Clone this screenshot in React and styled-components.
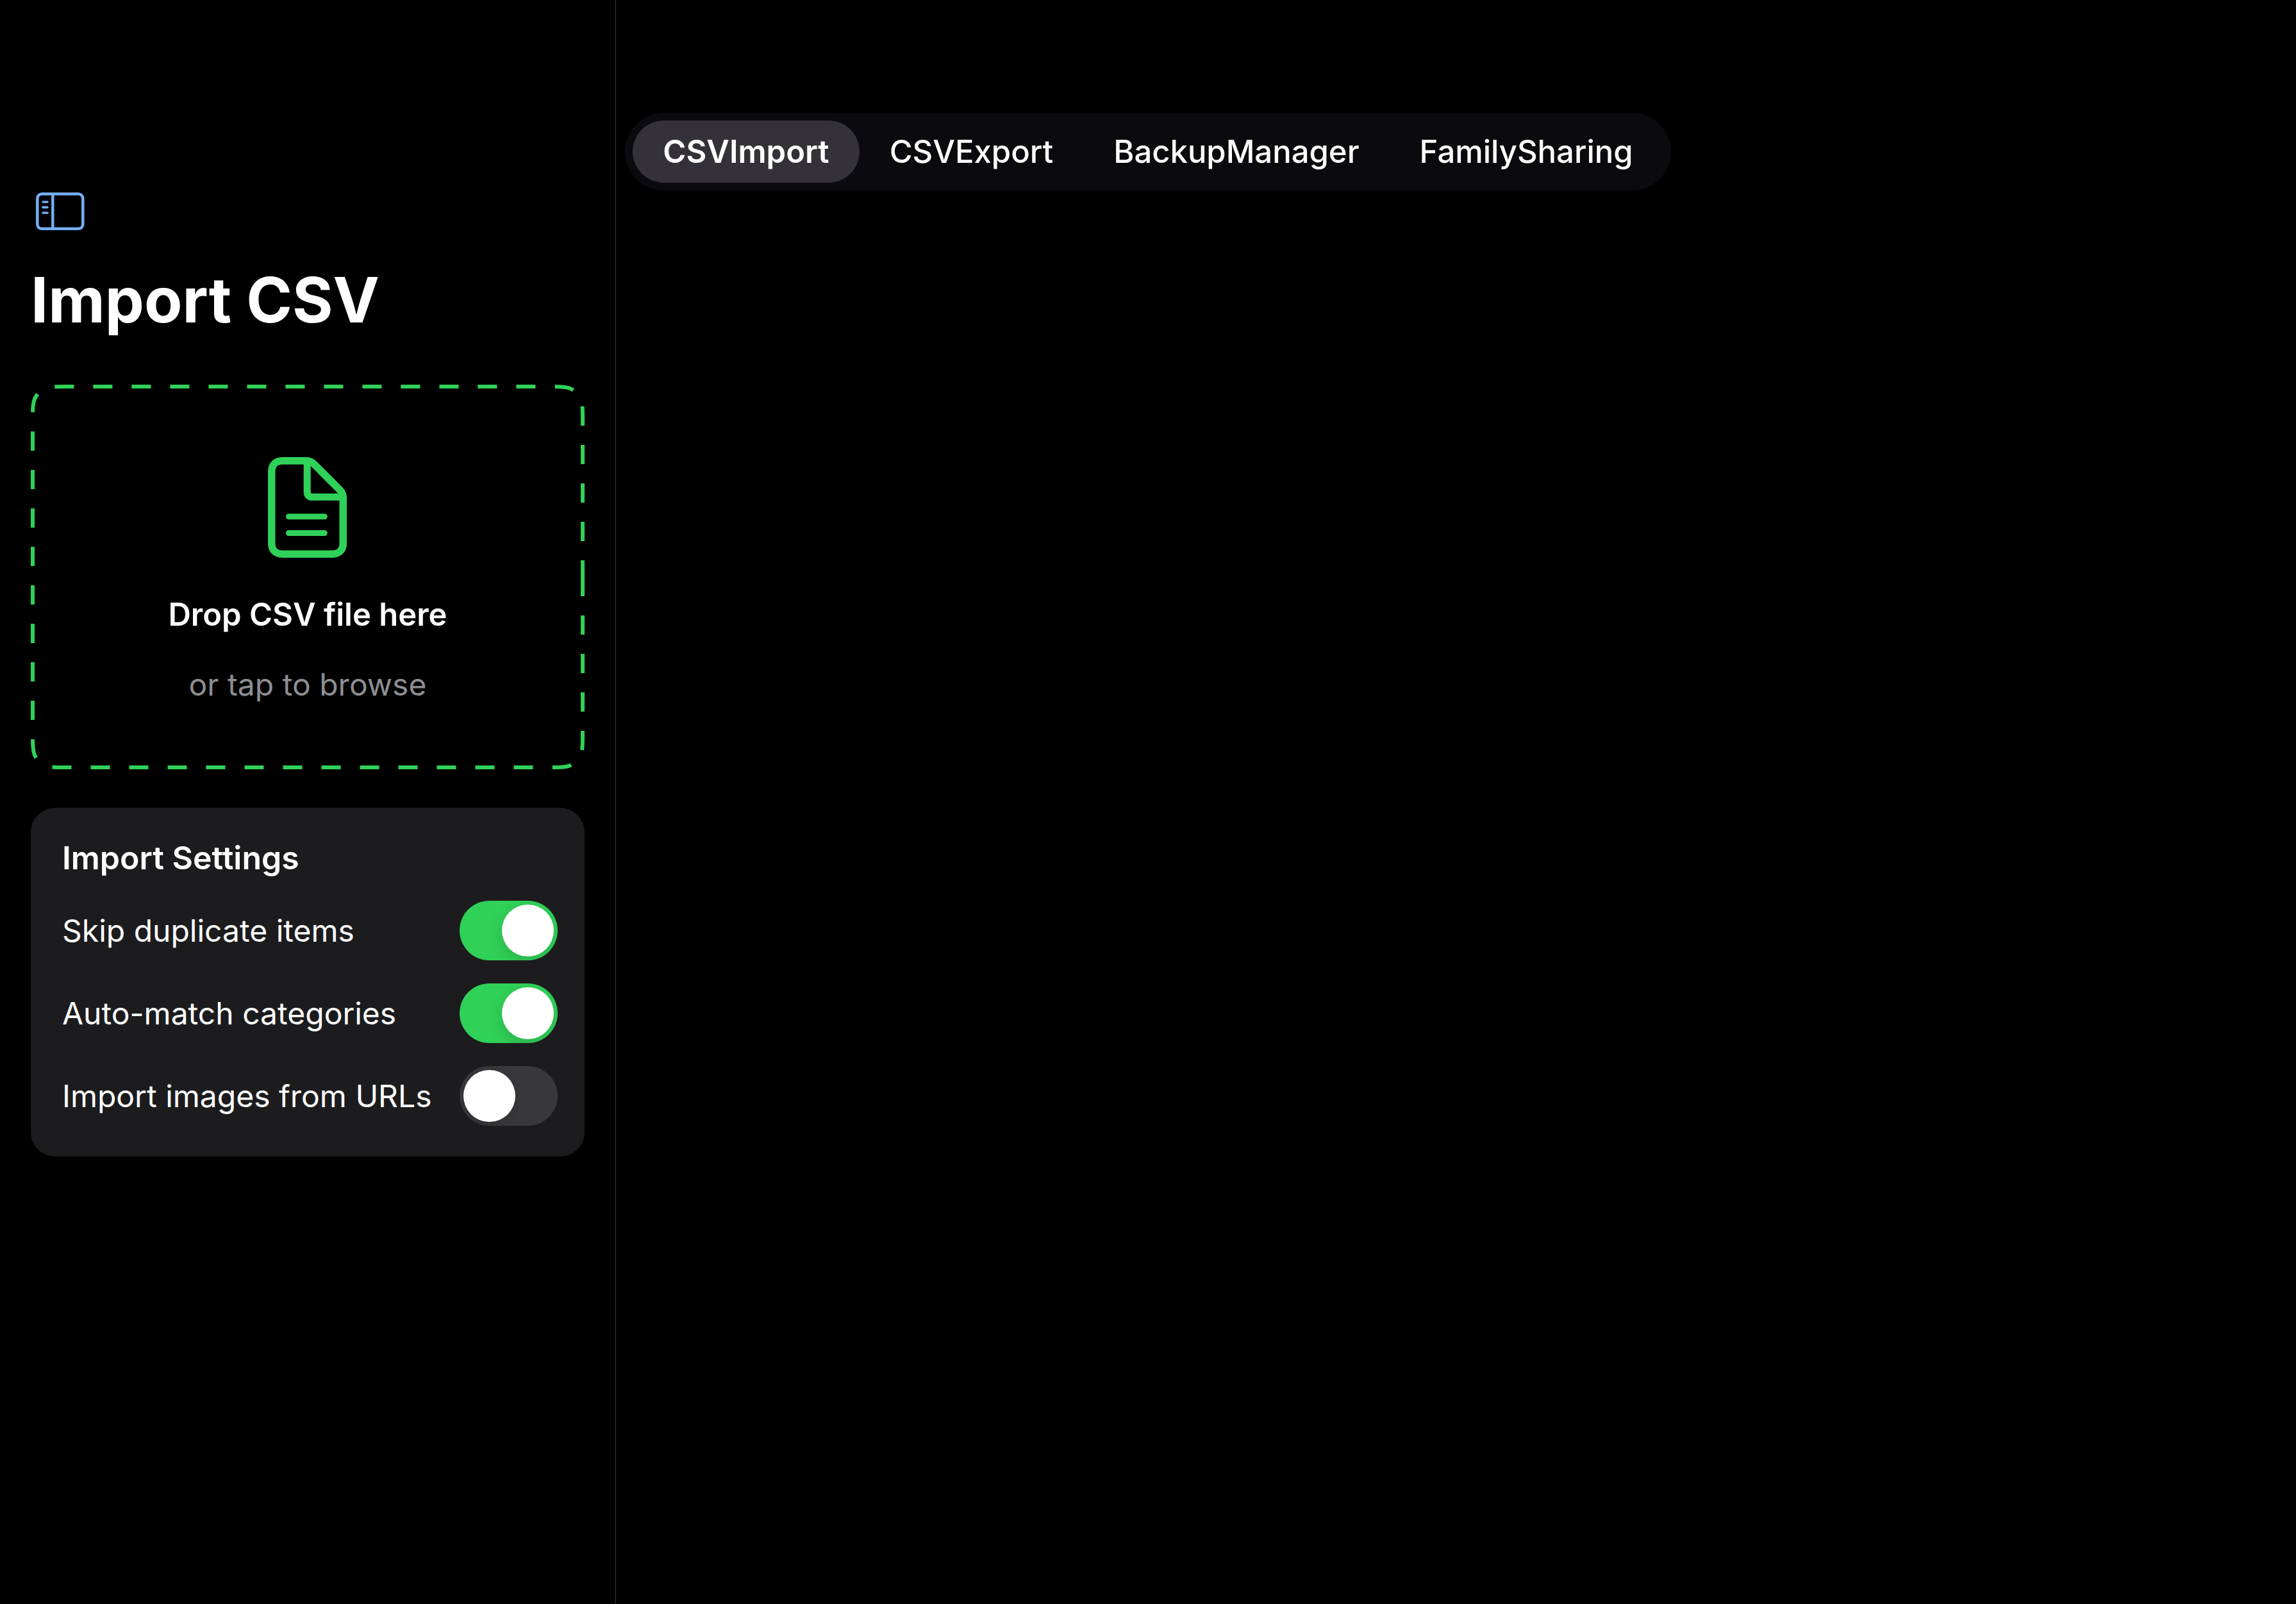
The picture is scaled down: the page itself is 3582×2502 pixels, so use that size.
import React, { useState } from "react";
import styled, { createGlobalStyle } from "styled-components";

const color = {
  background: "#000000",
  card: "#1c1c1e",
  divider: "#38383a",
  text: "#ffffff",
  muted: "#8e8e93",
  green: "#30d158",
  blue: "#76aef1",
  bar: "#0b0a0e",
  selected: "#343238",
  track: "#39383d",
};

const GlobalStyle = createGlobalStyle`
  *, *::before, *::after { box-sizing: border-box; }
  body {
    margin: 0;
    background: ${color.background};
    color: ${color.text};
    font-family: Inter, "Liberation Sans", sans-serif;
    font-size: 48px;
    line-height: 61px;
    font-optical-sizing: none;
    -webkit-font-smoothing: antialiased;
  }
  button {
    margin: 0;
    padding: 0;
    border: 0;
    background: none;
    color: inherit;
    font: inherit;
    cursor: pointer;
  }
`;

const Page = styled.div`
  display: grid;
  grid-template-columns: 961px minmax(0, 1fr);
  grid-template-rows: minmax(100vh, auto);
`;

const Sidebar = styled.aside`
  grid-area: 1 / 1;
  display: flex;
  flex-direction: column;
  align-items: stretch;
  padding: 300px 48px 48px;
  border-right: 1px solid ${color.divider};
`;

const Detail = styled.main`
  grid-area: 1 / 2;
`;

const TabBar = styled.nav`
  grid-area: 1 / 1 / 2 / -1;
  justify-self: center;
  align-self: start;
  display: flex;
  margin-top: 176px;
  padding: 12px;
  border-radius: 61px;
  background: ${color.bar};
`;

const Tab = styled.button`
  && {
    padding: 18px 47px;
    border-radius: 49px;
    background: ${(p) => (p.$selected ? color.selected : "transparent")};
    font-size: 49px;
    font-weight: ${(p) => (p.$selected ? 600 : 500)};
  }
`;

const SidebarToggle = styled.button`
  && {
    display: flex;
    align-self: flex-start;
    padding: 0 8px;
  }
`;

const Title = styled.h1`
  margin: 48px 0 72px;
  font-size: 97px;
  line-height: 120px;
  font-weight: 700;
`;

const DropZone = styled.button`
  && {
    position: relative;
    display: flex;
    flex-direction: column;
    align-items: center;
    padding: 113px 48px 102px;
  }
`;

const DashedOutline = styled.svg`
  position: absolute;
  inset: 0;
  width: 100%;
  height: 100%;
`;

const DropTitle = styled.span`
  margin-top: 58px;
  font-size: 49px;
  font-weight: 600;
`;

const DropHint = styled.span`
  margin-top: 48px;
  color: ${color.muted};
`;

const Card = styled.section`
  display: flex;
  flex-direction: column;
  gap: 36px;
  margin-top: 60px;
  padding: 48px 42px 48px 49px;
  border-radius: 38px;
  background: ${color.card};
`;

const CardTitle = styled.h2`
  margin: 0;
  font-size: 50px;
  font-weight: 600;
`;

const SettingRow = styled.label`
  display: flex;
  align-items: center;
  justify-content: space-between;
  white-space: nowrap;
  cursor: pointer;
`;

const Switch = styled.input`
  appearance: none;
  display: flex;
  flex: none;
  justify-content: flex-start;
  width: 153px;
  height: 93px;
  margin: 0;
  padding: 6px;
  overflow: hidden;
  border-radius: 47px;
  background: ${color.track};
  cursor: pointer;

  &::before {
    content: "";
    width: 81px;
    height: 81px;
    border-radius: 50%;
    background: #ffffff;
    box-shadow: 0 9px 24px rgba(0, 0, 0, 0.15);
  }

  &:checked {
    justify-content: flex-end;
    background: ${color.green};
  }
`;

/* Rounded rectangle with continuous-curvature corners, drawn clockwise
   from the middle of its right side. */
function smoothRect(left, top, right, bottom, r) {
  const a = 1.528665 * r;
  const b = 1.088493 * r;
  const c = 0.868407 * r;
  const d = 0.631494 * r;
  const e = 0.372824 * r;
  const f = 0.16906 * r;
  const g = 0.074911 * r;
  const corner = (point) => {
    const p = (x, y) => point(x, y).join(" ");
    return [
      `L ${p(0, a)}`,
      `C ${p(0, b)} ${p(0, c)} ${p(g, d)}`,
      `C ${p(f, e)} ${p(e, f)} ${p(d, g)}`,
      `C ${p(c, 0)} ${p(b, 0)} ${p(a, 0)}`,
    ].join(" ");
  };
  return [
    `M ${right} ${(top + bottom) / 2}`,
    corner((x, y) => [right - x, bottom - y]),
    corner((x, y) => [left + y, bottom - x]),
    corner((x, y) => [left + x, top + y]),
    corner((x, y) => [right - y, top + x]),
    "Z",
  ].join(" ");
}

const outlinePath = smoothRect(3, 3, 861, 597, 33);

function SidebarIcon() {
  return (
    <svg width="76" height="60" viewBox="0 0 76 60" fill="none" stroke={color.blue} aria-hidden="true">
      <rect x="2.3" y="2.6" width="71" height="54.2" rx="6.8" strokeWidth="4.5" />
      <path d="M26.3 3V57" strokeWidth="4.4" />
      <path d="M11 15H18M11 23.4H18M11 32H18" strokeWidth="3.6" strokeLinecap="round" />
    </svg>
  );
}

function DocumentIcon() {
  return (
    <svg width="124" height="157" viewBox="0 0 124 157" fill="none" stroke={color.green} aria-hidden="true">
      <path
        d="M22.5 5.8H60C65 5.8 68.5 7.5 72 11L111.5 50.5C115.5 54.5 117.300 58 117.300 63.5V134.5C117.300 145 111 151.2 100.5 151.2H22.5C12 151.2 5.8 145 5.8 134.5V22.5C5.8 12 12 5.8 22.5 5.8Z"
        strokeWidth="11.5"
      />
      <path d="M61.2 7V54.5C61.2 59.5 64 62.3 69 62.3H115" strokeWidth="11" />
      <path d="M32.5 92.8H88.3M32.5 118.5H88.3" strokeWidth="9" strokeLinecap="round" />
    </svg>
  );
}

const tabs = ["CSVImport", "CSVExport", "BackupManager", "FamilySharing"];

const settings = [
  { id: "skip-duplicates", label: "Skip duplicate items", on: true },
  { id: "match-categories", label: "Auto-match categories", on: true },
  { id: "import-images", label: "Import images from URLs", on: false },
];

export default function App() {
  const [tab, setTab] = useState(tabs[0]);

  return (
    <>
      <GlobalStyle />
      <Page>
        <Sidebar>
          <SidebarToggle type="button" aria-label="Toggle sidebar">
            <SidebarIcon />
          </SidebarToggle>
          <Title>Import CSV</Title>
          <DropZone type="button">
            <DashedOutline viewBox="0 0 864 600" preserveAspectRatio="none" aria-hidden="true">
              <path d={outlinePath} fill="none" stroke={color.green} strokeWidth="6" strokeDasharray="30 30" />
            </DashedOutline>
            <DocumentIcon />
            <DropTitle>Drop CSV file here</DropTitle>
            <DropHint>or tap to browse</DropHint>
          </DropZone>
          <Card>
            <CardTitle>Import Settings</CardTitle>
            {settings.map((s) => (
              <SettingRow key={s.id} htmlFor={s.id}>
                {s.label}
                <Switch id={s.id} type="checkbox" defaultChecked={s.on} />
              </SettingRow>
            ))}
          </Card>
        </Sidebar>
        <Detail />
        <TabBar>
          {tabs.map((name) => (
            <Tab key={name} type="button" $selected={name === tab} onClick={() => setTab(name)}>
              {name}
            </Tab>
          ))}
        </TabBar>
      </Page>
    </>
  );
}
